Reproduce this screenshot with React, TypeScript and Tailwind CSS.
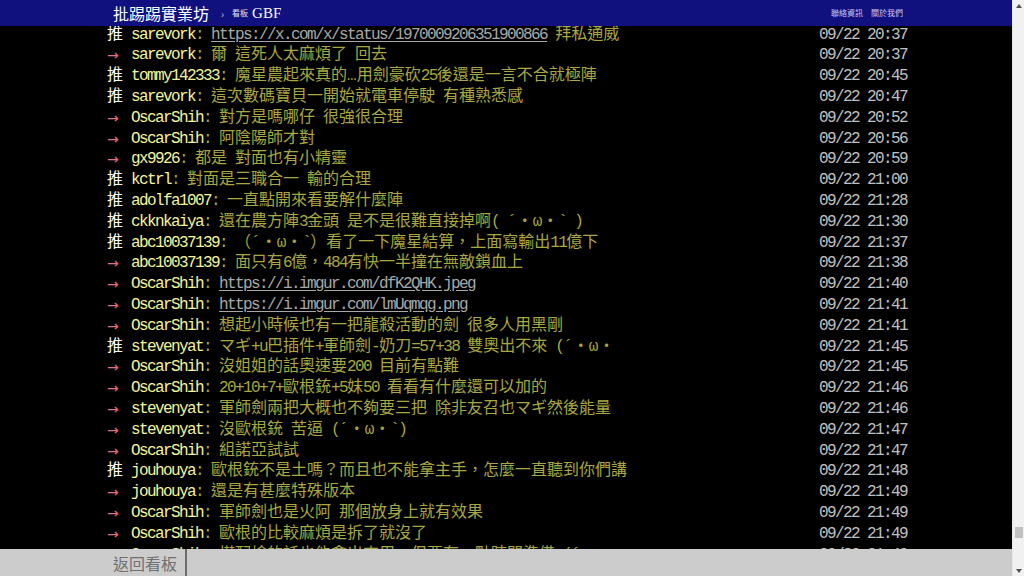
import React from "react";

type Push = {
  tag: "推" | "→";
  user: string;
  content: string;
  url?: string;
  time: string;
};

const pushes: Push[] = [
  { tag: "推", user: "sarevork", url: "https://x.com/x/status/1970009206351900866", content: " 拜私通威", time: "09/22 20:37" },
  { tag: "→", user: "sarevork", content: "爾 這死人太麻煩了 回去", time: "09/22 20:37" },
  { tag: "推", user: "tommy142333", content: "魔星農起來真的…用劍豪砍25後還是一言不合就極陣", time: "09/22 20:45" },
  { tag: "推", user: "sarevork", content: "這次數碼寶貝一開始就電車停駛 有種熟悉感", time: "09/22 20:47" },
  { tag: "→", user: "OscarShih", content: "對方是嗎哪仔 很強很合理", time: "09/22 20:52" },
  { tag: "→", user: "OscarShih", content: "阿陰陽師才對", time: "09/22 20:56" },
  { tag: "→", user: "gx9926", content: "都是 對面也有小精靈", time: "09/22 20:59" },
  { tag: "推", user: "kctrl", content: "對面是三職合一 輸的合理", time: "09/22 21:00" },
  { tag: "推", user: "adolfa1007", content: "一直點開來看要解什麼陣", time: "09/22 21:28" },
  { tag: "推", user: "ckknkaiya", content: "還在農方陣3金頭 是不是很難直接掉啊( ´・ω・` )", time: "09/22 21:30" },
  { tag: "推", user: "abc10037139", content: "（´・ω・`）看了一下魔星結算，上面寫輸出11億下", time: "09/22 21:37" },
  { tag: "→", user: "abc10037139", content: "面只有6億，484有快一半撞在無敵鎖血上", time: "09/22 21:38" },
  { tag: "→", user: "OscarShih", url: "https://i.imgur.com/dfK2QHK.jpeg", content: "", time: "09/22 21:40" },
  { tag: "→", user: "OscarShih", url: "https://i.imgur.com/lmUqmqg.png", content: "", time: "09/22 21:41" },
  { tag: "→", user: "OscarShih", content: "想起小時候也有一把龍殺活動的劍 很多人用黑剛", time: "09/22 21:41" },
  { tag: "推", user: "stevenyat", content: "マギ+u巴插件+軍師劍-奶刀=57+38 雙奧出不來 (´・ω・", time: "09/22 21:45" },
  { tag: "→", user: "OscarShih", content: "沒姐姐的話奧速要200 目前有點難", time: "09/22 21:45" },
  { tag: "→", user: "OscarShih", content: "20+10+7+歐根銃+5妹50 看看有什麼還可以加的", time: "09/22 21:46" },
  { tag: "→", user: "stevenyat", content: "軍師劍兩把大概也不夠要三把 除非友召也マギ然後能量", time: "09/22 21:46" },
  { tag: "→", user: "stevenyat", content: "沒歐根銃 苦逼 (´・ω・`)", time: "09/22 21:47" },
  { tag: "→", user: "OscarShih", content: "組諾亞試試", time: "09/22 21:47" },
  { tag: "推", user: "jouhouya", content: "歐根銃不是土嗎？而且也不能拿主手，怎麼一直聽到你們講", time: "09/22 21:48" },
  { tag: "→", user: "jouhouya", content: "還是有甚麼特殊版本", time: "09/22 21:49" },
  { tag: "→", user: "OscarShih", content: "軍師劍也是火阿 那個放身上就有效果", time: "09/22 21:49" },
  { tag: "→", user: "OscarShih", content: "歐根的比較麻煩是拆了就沒了", time: "09/22 21:49" },
  { tag: "→", user: "OscarShih", content: "搭配槍的話也能拿出來用，但要有一點時間準備 (´・ω", time: "09/22 21:49" },
];

// ascii runs get squeezed to an 8px cell, cjk stays at 16px
function Mixed({ text }: { text: string }) {
  const parts = text.split(/([\x20-\x7e]+)/).filter((p) => p !== "");
  return (
    <>
      {parts.map((p, i) =>
        /^[\x20-\x7e]+$/.test(p) ? (
          <span key={i} className="tracking-[-1.6px] whitespace-pre">
            {p}
          </span>
        ) : (
          <span key={i}>{p}</span>
        )
      )}
    </>
  );
}

function PushRow({ push }: { push: Push }) {
  return (
    <div className="flex h-[20.8px] leading-[20.8px] whitespace-nowrap">
      {push.tag === "推" ? (
        <span className="w-6 shrink-0 text-white">推</span>
      ) : (
        <span className="w-6 shrink-0 font-['DejaVu_Sans',sans-serif] text-[14px] leading-[20.8px] text-[#e07080]">
          →
        </span>
      )}
      <span className="shrink-0 text-[#f4f49c]">
        <Mixed text={push.user} />
      </span>
      <span className="flex-1 overflow-hidden text-[#a8a840]">
        <Mixed text=": " />
        {push.url && (
          <span className="text-[#a8a8a8] underline underline-offset-2">
            <Mixed text={push.url} />
          </span>
        )}
        <Mixed text={push.content} />
      </span>
      <span className="shrink-0 text-[#c0c0c0]">
        <Mixed text={push.time} />
      </span>
    </div>
  );
}

function Scrollbar() {
  return (
    <div className="flex w-[12px] flex-col bg-[#f1f1f1] border-l border-[#e6e6e6]">
      <div className="flex h-[11px] items-center justify-center">
        <svg width="6" height="4" viewBox="0 0 6 4">
          <path d="M3 0 L6 4 L0 4 Z" fill="#505050" />
        </svg>
      </div>
      <div className="flex-1">
        <div className="mx-auto mt-[516px] h-[11px] w-[8px] bg-[#c1c1c1]" />
      </div>
      <div className="flex h-[11px] items-center justify-center">
        <svg width="6" height="4" viewBox="0 0 6 4">
          <path d="M0 0 L6 0 L3 4 Z" fill="#505050" />
        </svg>
      </div>
    </div>
  );
}

export default function App() {
  return (
    <div className="flex h-[576px] w-[1024px] overflow-hidden bg-black font-['Liberation_Mono','Noto_Sans_CJK_TC',monospace] text-[16px]">
      <div className="relative flex w-[1012px] flex-col">
        <div className="relative z-10 flex h-[26px] shrink-0 items-center justify-between bg-[#10107f] pl-[113px] pr-[109px]">
          <div className="flex items-center font-['Noto_Sans_CJK_TC',sans-serif]">
            <span className="text-[16px] leading-none text-white">批踢踢實業坊</span>
            <span className="ml-[12px] text-[10px] text-[#c8c8e8]">›</span>
            <span className="ml-[8px] text-[8px] text-[#e0e0f0]">看板</span>
            <span className="ml-[4px] font-['Liberation_Serif',serif] text-[15px] text-white">
              GBF
            </span>
          </div>
          <div className="flex gap-[8px] font-['Noto_Sans_CJK_TC',sans-serif] text-[8px] text-[#c8c8f0]">
            <span>聯絡資訊</span>
            <span>關於我們</span>
          </div>
        </div>

        <div className="-mt-[1.4px] ml-[107px] w-[800px]">
          {pushes.map((p, i) => (
            <PushRow key={i} push={p} />
          ))}
        </div>

        <div className="absolute bottom-0 left-0 right-0 z-10 flex h-[27px] bg-[#cccccc] font-['Noto_Sans_CJK_TC',sans-serif]">
          <div className="flex items-center border-r-2 border-[#6a6a6a] pl-[113px] pr-[8px] text-[16px] text-[#707070]">
            返回看板
          </div>
        </div>
      </div>
      <Scrollbar />
    </div>
  );
}
